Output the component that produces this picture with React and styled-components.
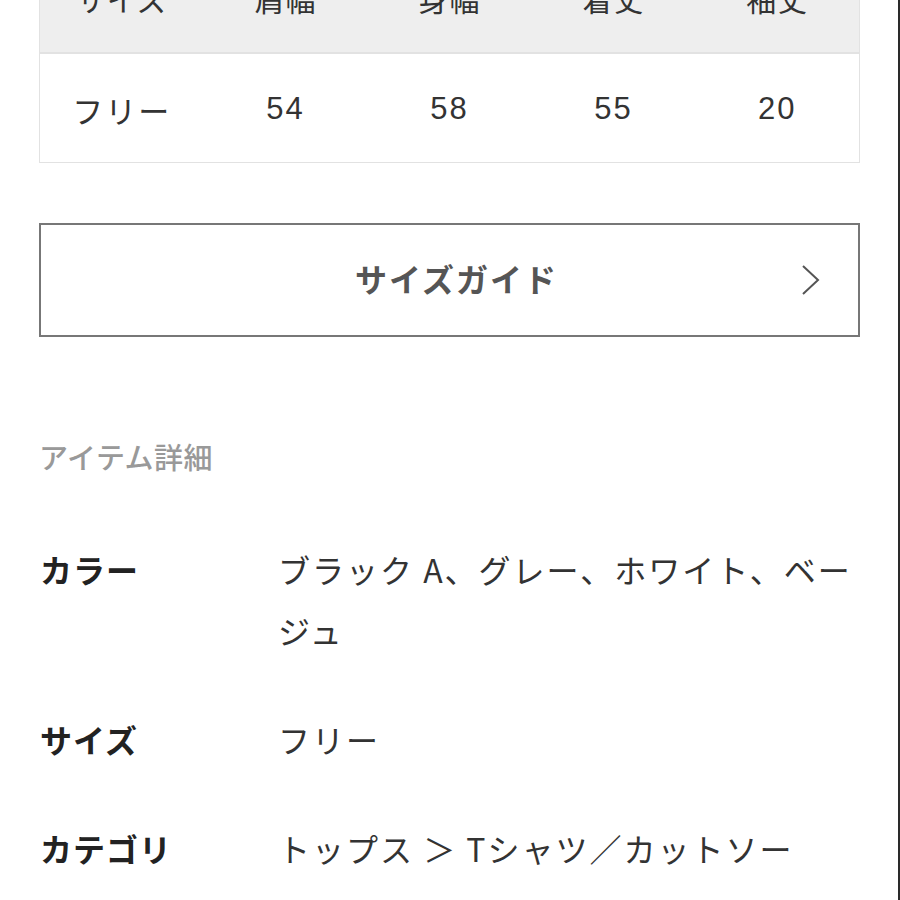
import styled, { createGlobalStyle } from 'styled-components';

const GlobalStyle = createGlobalStyle`
  html, body {
    margin: 0;
    padding: 0;
    background: #ffffff;
  }
  body {
    font-family: "Liberation Sans", "Noto Sans CJK JP", sans-serif;
    color: #333333;
  }
`;

const Screen = styled.div`
  width: 900px;
  height: 900px;
  box-sizing: border-box;
  overflow: hidden;
  border-right: 2px solid #2a2a2a;
  padding: 0 38px 0 39px;
`;

const SizeTable = styled.table`
  width: 821px;
  margin-top: -57px;
  border-collapse: collapse;
  table-layout: fixed;
  border: 1px solid #e2e2e2;
`;

const HeadCell = styled.th`
  height: 108px;
  padding: 0;
  background: #eeeeee;
  border-bottom: 2px solid #e2e2e2;
  font-size: 30px;
  font-weight: 400;
  color: #333333;
  text-align: center;
  letter-spacing: 1px;
`;

const Cell = styled.td`
  height: 106px;
  padding: 2px 0 0;
  font-size: 31px;
  letter-spacing: 2px;
  color: #333333;
  text-align: center;
`;

const GuideButton = styled.button`
  position: relative;
  display: flex;
  align-items: center;
  justify-content: center;
  width: 821px;
  height: 114px;
  margin-top: 60px;
  padding: 0 0 5px 14px;
  background: #ffffff;
  border: 2px solid #777777;
  font-family: "Noto Sans CJK JP", sans-serif;
  font-size: 32px;
  font-weight: 700;
  letter-spacing: 2px;
  color: #555555;
`;

const Chevron = styled.svg`
  position: absolute;
  right: 37px;
  top: 50%;
  transform: translateY(-50%);
`;

const SectionTitle = styled.h2`
  margin: 99px 0 0 0;
  font-family: "Noto Sans CJK JP", sans-serif;
  font-size: 29px;
  line-height: 40px;
  font-weight: 500;
  color: #999999;
  letter-spacing: 0.5px;
`;

const DetailList = styled.dl`
  display: grid;
  grid-template-columns: 238px 1fr;
  row-gap: 48px;
  margin: 63px 0 0 1px;
`;

const Term = styled.dt`
  font-family: "Noto Sans CJK JP", sans-serif;
  font-size: 32px;
  line-height: 61px;
  font-weight: 700;
  letter-spacing: 1px;
  color: #222222;
`;

const Desc = styled.dd`
  margin: 0;
  font-family: "Noto Sans CJK JP", sans-serif;
  font-size: 32px;
  line-height: 61px;
  letter-spacing: 2px;
  color: #333333;
`;

const headers = ['サイズ', '肩幅', '身幅', '着丈', '袖丈'];
const values = ['フリー', '54', '58', '55', '20'];

const details = [
  { term: 'カラー', desc: 'ブラック A、グレー、ホワイト、ベージュ' },
  { term: 'サイズ', desc: 'フリー' },
  { term: 'カテゴリ', desc: 'トップス ＞ Tシャツ／カットソー' },
];

export default function App() {
  return (
    <>
      <GlobalStyle />
      <Screen>
        <SizeTable>
          <thead>
            <tr>
              {headers.map((h) => (
                <HeadCell key={h}>{h}</HeadCell>
              ))}
            </tr>
          </thead>
          <tbody>
            <tr>
              {values.map((v, i) => (
                <Cell key={i}>{v}</Cell>
              ))}
            </tr>
          </tbody>
        </SizeTable>

        <GuideButton>
          サイズガイド
          <Chevron width="20" height="32" viewBox="0 0 20 32" fill="none">
            <path d="M2 2 L17 16 L2 30" stroke="#555555" strokeWidth="2" />
          </Chevron>
        </GuideButton>

        <SectionTitle>アイテム詳細</SectionTitle>

        <DetailList>
          {details.map((d) => (
            <>
              <Term key={d.term + '-t'}>{d.term}</Term>
              <Desc key={d.term + '-d'}>{d.desc}</Desc>
            </>
          ))}
        </DetailList>
      </Screen>
    </>
  );
}
